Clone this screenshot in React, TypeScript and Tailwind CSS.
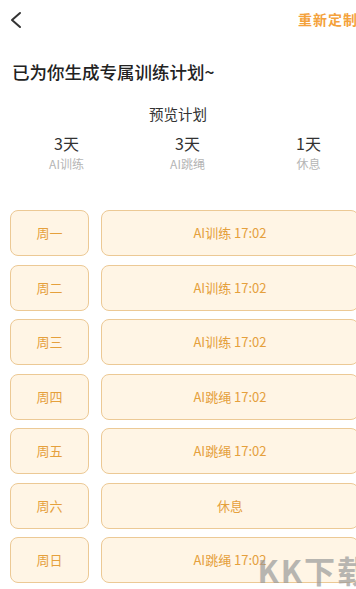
import React from 'react';

const stats = [
  { value: '3天', label: 'AI训练' },
  { value: '3天', label: 'AI跳绳' },
  { value: '1天', label: '休息' },
];

const days = [
  { day: '周一', plan: 'AI训练 17:02' },
  { day: '周二', plan: 'AI训练 17:02' },
  { day: '周三', plan: 'AI训练 17:02' },
  { day: '周四', plan: 'AI跳绳 17:02' },
  { day: '周五', plan: 'AI跳绳 17:02' },
  { day: '周六', plan: '休息' },
  { day: '周日', plan: 'AI跳绳 17:02' },
];

const font = { fontFamily: '"Noto Sans CJK SC", "Noto Sans", sans-serif' };

export default function App() {
  return (
    <div className="relative w-[356px] h-[589px] overflow-hidden bg-white" style={font}>
      {/* header */}
      <div className="flex items-center justify-between h-[40px] pl-[9px]">
        <svg width="14" height="18" viewBox="0 0 14 18" className="mt-[-1px]">
          <path d="M11 2 L3 9 L11 16" fill="none" stroke="#333" strokeWidth="2" strokeLinecap="round" strokeLinejoin="round" />
        </svg>
        <span className="text-[14px] font-bold text-[#f4a23c] tracking-[1px] mr-[-2px] mt-[-1px]">重新定制</span>
      </div>

      <h1 className="mt-[20px] pl-[12px] text-[17.5px] leading-[24px] font-medium text-[#222]">已为你生成专属训练计划~</h1>

      <div className="mt-[20px] text-center text-[14.5px] leading-[20px] text-[#333]">预览计划</div>

      <div className="flex ml-[6px] mt-[8px]">
        {stats.map((s, i) => (
          <div key={i} className="w-[121px] shrink-0 flex flex-col items-center">
            <span className="text-[16px] leading-[22px] text-[#333]">{s.value}</span>
            <span className="text-[12px] leading-[20px] text-[#b5b5b5]">{s.label}</span>
          </div>
        ))}
      </div>

      <div className="mt-[36px] flex flex-col gap-[8.5px] pl-[10px]">
        {days.map((d, i) => (
          <div key={i} className="flex gap-[12px] h-[46px]">
            <div className="w-[79px] shrink-0 rounded-[8px] border border-[#ecc995] bg-[#fff5e5] flex items-center justify-center text-[13px] text-[#e5a03c]">
              {d.day}
            </div>
            <div className="w-[258px] shrink-0 rounded-[8px] border border-[#ecc995] bg-[#fff5e5] flex items-center justify-center text-[13px] text-[#e5a03c]">
              {d.plan}
            </div>
          </div>
        ))}
      </div>

      {/* watermark */}
      <div className="absolute right-[-14px] bottom-[2px] text-[31px] leading-[34px] font-bold text-[#9a9a9a] opacity-70 tracking-[2px] pointer-events-none">
        KK下载
      </div>
    </div>
  );
}
